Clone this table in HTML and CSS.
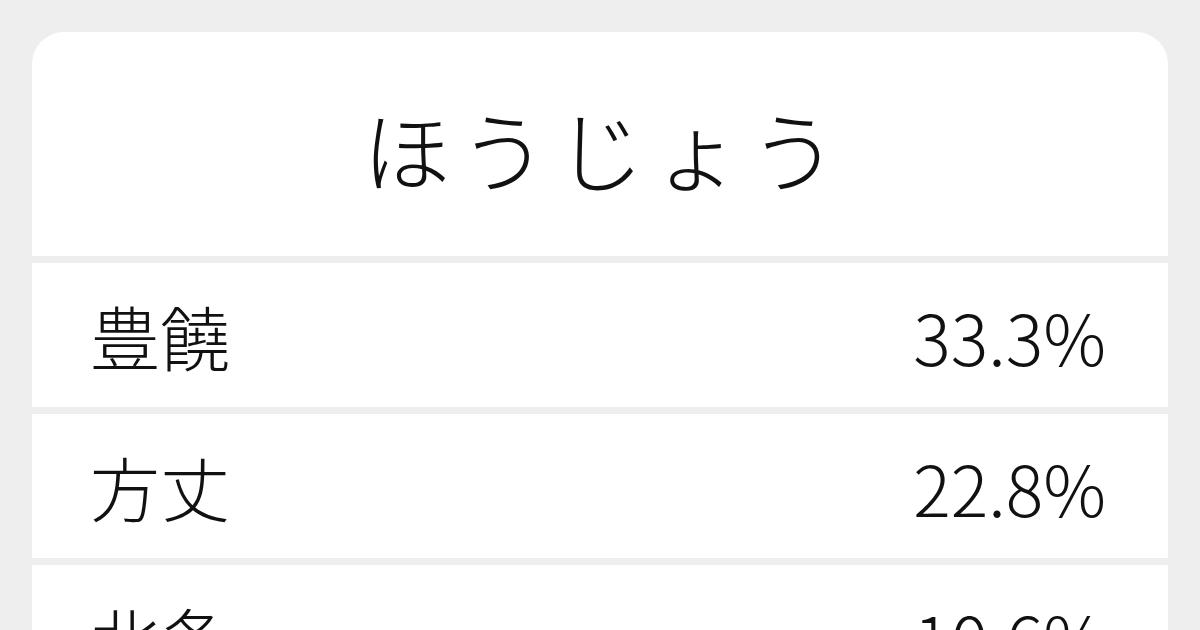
FILE: index.html
```html
<!DOCTYPE html>
<html lang="ja">
<head>
    <meta charset="utf-8">
    <title>ほうじょう</title>
    <link rel="stylesheet" href="styles.css">
</head>
<body>
    <div class="card">
        <h1 class="reading">ほうじょう</h1>
        <div class="row">
            <span class="word">豊饒</span>
            <span class="rate">33.3%</span>
        </div>
        <div class="row">
            <span class="word">方丈</span>
            <span class="rate">22.8%</span>
        </div>
        <div class="row">
            <span class="word">北条</span>
            <span class="rate">10.6%</span>
        </div>
    </div>
</body>
</html>
```

FILE: styles.css
```css
html, body {
    margin: 0;
    height: 100%;
    overflow: hidden;
}
body {
    font-family: "Noto Sans CJK JP", "Noto Sans", sans-serif;
    font-weight: 300;
    background-color: #eeeeee;
    color: #111;
    padding: 32px 32px 0;
    box-sizing: border-box;
}
.card {
    display: flex;
    flex-direction: column;
    gap: 7px;
    border-radius: 32px 32px 0 0;
    overflow: hidden;
}
.reading {
    margin: 0;
    height: 224px;
    display: flex;
    align-items: center;
    justify-content: center;
    background-color: #fff;
    font-size: 88px;
    font-weight: 300;
    letter-spacing: 0.1em;
    padding: 4px 0 0 0.1em;
    box-sizing: border-box;
}
.row {
    height: 144px;
    display: flex;
    align-items: center;
    justify-content: space-between;
    padding: 0 62px 0 58px;
    background-color: #fff;
    font-size: 70px;
    flex-shrink: 0;
}
```
